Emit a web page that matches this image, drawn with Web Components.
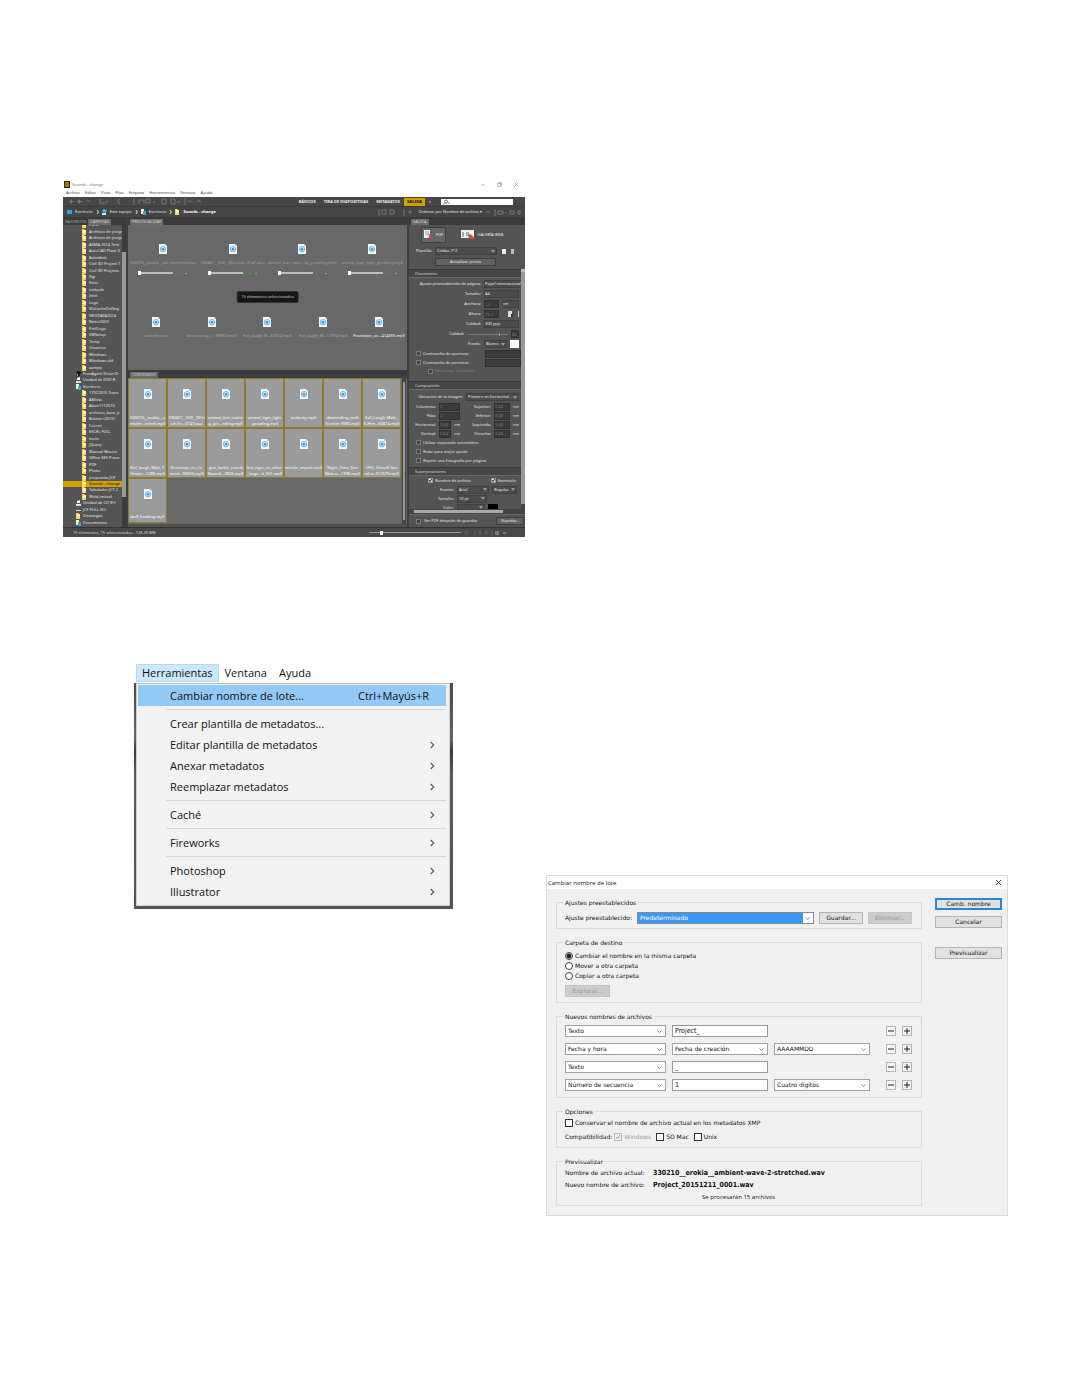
<!DOCTYPE html>
<html lang="es">
<head>
<meta charset="utf-8">
<title>Cambiar nombre de lote</title>
<style>
body{margin:0;background:#fff}
</style>
</head>
<body>
<guide-page>
  <bridge-window slot="left"></bridge-window>
  <tools-menu slot="left"></tools-menu>
  <rename-dialog slot="right"></rename-dialog>
</guide-page>
<script>
function define(name, css, html) {
  customElements.define(name, class extends HTMLElement {
    constructor() {
      super();
      const markup = typeof html === 'function' ? html(this) : html;
      this.attachShadow({mode: 'open'}).innerHTML = `<style>*{box-sizing:border-box}:host{display:block;box-sizing:border-box}:host([hidden]){display:none}${css}</style>${markup}`;
    }
  });
}

/* ---------- page ---------- */
define('guide-page', `
:host{display:grid;grid-template-columns:1fr 1fr;gap:21px;min-height:100vh;padding:180px 63px 170px}
.left{display:flex;flex-direction:column;gap:126px}
.right{align-self:end}
::slotted(tools-menu){margin:0 72px 0 71px}
`, `<div class="left"><slot name="left"></slot></div><div class="right"><slot name="right"></slot></div>`);

/* ---------- small shared parts ---------- */
define('file-icon', `:host{width:8px;height:10px}svg{display:block}`,
`<svg width="8" height="10" viewBox="0 0 8 10"><path d="M0 0H6L8 2V10H0Z" fill="#f6fafd"/><path d="M6 0V2H8Z" fill="#b9cad6"/><circle cx="4" cy="5.2" r="2.7" fill="none" stroke="#4a9fdc" stroke-width=".8"/><circle cx="4" cy="5.2" r="1.3" fill="#2f8fd8"/><path d="M.8 5.2Q4 2.2 7.2 5.2Q4 8.2.8 5.2" fill="none" stroke="#7fbde8" stroke-width=".5"/></svg>`);

define('folder-icon', `:host{width:5px;height:6px;flex:none}svg{display:block}`,
el => {
  const k = el.getAttribute('kind');
  const art = {
    drive: '<path d="M0 4H5V6H0Z" fill="#ddd"/><path d="M1 1L4 0V3H1Z" fill="#fff"/>',
    black: '<path d="M1 0L5 1 3 6 0 5Z" fill="#111"/><path d="M0 3H2V6Z" fill="#e2a13a"/>',
    desk: '<path d="M0 0H3V5H0Z" fill="#f2f7c8"/><path d="M2 2H5V6H2Z" fill="#37a6df"/>',
    blue: '<path d="M0 1H5V5H0Z" fill="#27a0e8"/>',
    pc: '<path d="M1 0L5 1 4 4 0 3Z" fill="#35b0f0"/><path d="M0 4H4V6H0Z" fill="#d3e8f4"/>',
    flat: '<path d="M0 3H5V4H0Z" fill="#ddd"/>'
  }[k] || '<path d="M0 0H2L3 1H4V6H0Z" fill="#f2d566"/><path d="M1 1H4V4H1Z" fill="#fdf0a8"/>';
  return `<svg width="5" height="6" viewBox="0 0 5 6">${art}</svg>`;
});

/* ---------- Bridge: folder tree ---------- */
const folders = [
  ['Intro','',2],['Archivos de progr','',2],['Archivos de progr','',2],['ASMA 2014 Tem','',2],['AutoCAD Plant 3','',2],
  ['Autodesk','',2],['Civil 3D Project T','',2],['Civil 3D Projects','',2],['flgr','',2],['fileio','',2],['inetpub','',2],['Intel','',2],
  ['Logs','',2],['MsCacheDelSeg','',2],['NEODATA2014','',2],['Neevi2009','',2],['PerfLogs','',2],['SWSetup','',2],['Temp','',2],
  ['Usuarios','',2],['Windows','',2],['Windows.old','',2],['xampp','',2],['FreeAgent Drive (D','black',1],['Unidad de DVD R','drive',1],
  ['Escritorio','desk',1],['17022015 Trans','',2],['ABlista','',2],['Aleze1112015','',2],['archivos_base_p','',2],['Boletin (2015)','',2],
  ['Correo','',2],['EXCEL FULL','',2],['horts','',2],['JQuery','',2],['Manual Bitacor','',2],['Office 365 Prese','',2],['PDF','',2],['Photo','',2],
  ['propuesta JCP','',2],['Sounds - change','',2,1],['Tabulador JCT 2','',2],['WebLimitud','',2],['Unidad de CD (F:)','drive',1],['JCF FULL (E:)','flat',1],
  ['Descargas','',1],['Documentos','desk',1]];
define('folder-tree', `
:host{display:flex;min-width:0;background:#555;overflow:hidden}
ul{flex:1;min-width:0;margin:-3px 0 1px;padding:0;list-style:none;display:flex;flex-direction:column}
li{flex:1 1 0;min-height:0;display:flex;align-items:center;gap:2px;padding-left:13px;white-space:nowrap;line-height:6px}
li.l2{padding-left:19px}
li.on{background:#d2a000;color:#111}
.bar{width:4px;background:#3c3c3c;padding:27px 0 30px}
.bar i{display:block;height:100%;background:#999}
`, () => `<ul>${folders.map(f => `<li class="l${f[2]} ${f[3] ? 'on' : ''}"><folder-icon kind="${f[1]}"></folder-icon><span>${f[0]}</span></li>`).join('')}</ul><div class="bar"><i></i></div>`);

/* ---------- Bridge: previews and thumbnails ---------- */
define('audio-preview', `
:host{display:flex;flex-direction:column;align-items:center;gap:6px;color:#a4a4a4;min-width:0;line-height:6px;white-space:nowrap}
:host([bright]){color:#fff}
label{display:flex;align-items:center;gap:3px;height:2px}
:host([mute]) label{display:none}
input{appearance:none;width:35px;height:2px;margin:0;background:#bdbdbd}
input::-webkit-slider-thumb{appearance:none;width:3px;height:4px;background:#fff}
b{width:6px;height:3px;background:#5b7c50}
u{width:2px;height:1px;background:#999}
`, `<file-icon></file-icon><span><slot></slot></span><label><input type="range" value="0" aria-label="Posición"><b></b><u></u></label>`);

define('media-thumb', `
:host{display:flex;flex-direction:column;align-items:center;justify-content:space-between;padding:10px 0 0;height:50px;background:#9b9b9b;border:1px solid #8b7b2c;color:#fff;min-width:0;line-height:6px;text-align:center}
:host([last]){height:45px}
span{height:12px;white-space:nowrap}
:host([last]) span{height:8px}
`, `<file-icon></file-icon><span><slot></slot></span>`);

/* ---------- Bridge: output panel ---------- */
define('panel-field', `
:host{display:flex;align-items:center;gap:3px;height:var(--h,10px);padding-right:2px}
label{display:flex;align-items:center;justify-content:flex-end;gap:3px;width:var(--w,72px);white-space:nowrap;flex:none}
`, `<label><slot></slot></label><slot name="ctl"></slot>`);

const panelCss = `
input,select,button{font:inherit;color:#e8e8e8;margin:0;border-radius:0;line-height:6px}
select{appearance:none;height:8px;padding:0 4px 0 1px;border:1px solid #414141;background:#4b4b4b url("data:image/svg+xml,%3Csvg xmlns='http://www.w3.org/2000/svg' width='4' height='3'%3E%3Cpath d='M0 0H4L2 3Z' fill='%23999'/%3E%3C/svg%3E") no-repeat right 1px center}
select.plain{background-image:none;padding:0}
input[type=text]{height:8px;border:1px solid #303030;background:#3b3b3b;color:#777;padding:0;min-width:0}
input[type=checkbox]{appearance:none;width:5px;height:5px;border:1px solid #777;background:#444;margin:0;flex:none}
input[type=checkbox]:checked{border-color:#999;background:#eee url("data:image/svg+xml,%3Csvg xmlns='http://www.w3.org/2000/svg' width='3' height='3'%3E%3Cpath d='M0 1L1 2.500 3 0' fill='none' stroke='%23222'/%3E%3C/svg%3E")}
input[type=color]{appearance:none;border:0;padding:0;width:10px;height:8px;background:#fff}
input::-webkit-color-swatch-wrapper{padding:0}
input::-webkit-color-swatch{border:0}
input[type=range]{appearance:none;height:1px;background:#777}
input::-webkit-slider-thumb{appearance:none;width:1px;height:3px;background:#999}
button{border:1px solid #3f3f3f;background:#626262;padding:0;height:8px}
`;
define('output-panel', panelCss + `
:host{display:flex;flex-direction:column;background:#545454;overflow:hidden;min-width:0}
.modes{display:flex;padding:2px 0 0 12px;gap:14px;height:19px}
.modes button{display:flex;align-items:center;justify-content:center;gap:3px;height:16px;width:25px;background:#666}
.modes button+button{width:44px;background:none;border:0}
.tpl{display:flex;align-items:center;gap:3px;height:10px;margin:2px 0 2px 7px}
.tpl select{width:62px}.tpl i{width:4px;height:5px;background:#eee;margin-left:2px}.tpl i+i{width:3px;background:#bbb}
.upd{width:61px;margin:0 0 3px 26px;flex:none}
.mid{display:flex;min-height:0}
.props{flex:1;min-width:0;height:240px;overflow:hidden}
.vbar{width:4px;background:#444;padding-bottom:5px}.vbar i{display:block;height:100%;background:#999;border-top:3px solid #bbb}
h3{margin:0;height:9px;font:inherit;color:#ddd;padding:0 0 0 6px;background:#464646;border-top:1px solid #383838;border-bottom:1px solid #686868;display:flex;align-items:center}
.sec{height:103px;padding-top:1px}.sec2{height:77px;padding-top:2px}
.check{display:flex;align-items:center;gap:2px;height:9px;padding-left:7px;white-space:nowrap}
.check input[type=text]{width:36px;margin-left:auto}
.check.sub{padding-left:19px;color:#888;height:8px}
.two{display:grid;grid-template-columns:53px 1fr}
.two panel-field{--h:9px}
.two input{width:22px}
.two panel-field:nth-child(even){--w:29px}.two panel-field:nth-child(odd){--w:27px}
.two panel-field:nth-child(even) input{width:16px}
.split{display:flex;height:9px;padding:0 5px 0 19px;justify-content:space-between}
.split label{display:flex;gap:2px;align-items:center}
.hbar{height:5px;background:#444;padding:1px 22px 1px 5px}.hbar i{display:block;height:3px;background:#aaa}
.foot{display:flex;align-items:center;gap:3px;padding:0 1px 0 7px;flex:1;border-top:1px solid #666}
.foot button{margin-left:auto;width:28px}
`, `
<div class="modes"><button><svg width="9" height="10" viewBox="0 0 9 10"><path d="M0 0H6V8H0Z" fill="#eee"/><path d="M1 2H5M1 4H5" stroke="#777" stroke-width=".6"/><path d="M3 5L5 4 9 8 7 10 4 7Z" fill="#c84b4b"/><circle cx="4" cy="6" r="1" fill="#fff"/></svg>PDF</button><button><svg width="14" height="10" viewBox="0 0 14 10"><path d="M0 0H13V8H0Z" fill="#eee"/><path d="M1 2H3V7H1ZM5 2H8V6H5Z" fill="#aaa"/><path d="M7 5L9 4 14 8 11 10 8 8Z" fill="#c84b4b"/></svg>GALERÍA WEB</button></div>
<div class="tpl"><label for="tpl">Plantilla:</label><select id="tpl"><option>Celdas 2*2</option></select><i></i><i></i></div>
<button class="upd">Actualizar previa</button>
<div class="mid"><div class="props">
<h3>Documento</h3>
<div class="sec">
<panel-field>Ajuste preestablecido de página:<select slot="ctl" class="plain" aria-label="Ajuste" style="width:38px"><option>Papel internacional</option></select></panel-field>
<panel-field>Tamaño:<select slot="ctl" class="plain" aria-label="Tamaño" style="width:38px"><option>A4</option></select></panel-field>
<panel-field>Anchura:<input slot="ctl" type="text" value="21" aria-label="Anchura" style="width:16px"><select slot="ctl" class="plain" aria-label="Unidad" style="width:19px"><option>cm</option></select></panel-field>
<panel-field>Altura:<input slot="ctl" type="text" value="29.7" aria-label="Altura" style="width:16px"><svg slot="ctl" width="18" height="8"><path d="M6 1h4v6h-4z" fill="#ddd"/><path d="M9 4h2v3h-2z" fill="#333"/><path d="M16 1h1v6h-1z" fill="#ccc"/></svg></panel-field>
<panel-field>Calidad:<select slot="ctl" class="plain" aria-label="Calidad" style="width:38px"><option>300 ppp</option></select></panel-field>
<panel-field style="--w:55px">Calidad:<input slot="ctl" type="range" value="80" aria-label="Calidad" style="width:41px"><input slot="ctl" type="text" value="80" aria-label="Calidad %" style="width:10px"></panel-field>
<panel-field>Fondo:<select slot="ctl" aria-label="Fondo" style="width:25px"><option>Blanco</option></select><input slot="ctl" type="color" value="#ffffff" aria-label="Color de fondo"></panel-field>
<div class="check"><input type="checkbox" id="c1"><label for="c1">Contraseña de apertura:</label><input type="text" aria-label="Contraseña de apertura"></div>
<div class="check"><input type="checkbox" id="c2"><label for="c2">Contraseña de permisos</label><input type="text" aria-label="Contraseña de permisos"></div>
<div class="check sub"><input type="checkbox" id="c3"><label for="c3">Desactivar impresión</label></div>
</div>
<h3>Composición</h3>
<div class="sec2">
<panel-field style="--w:54px">Ubicación de la imagen:<select slot="ctl" aria-label="Ubicación de la imagen" style="width:53px"><option>Primero en horizontal ...</option></select></panel-field>
<div class="two">
<panel-field>Columnas:<input slot="ctl" type="text" value="2" aria-label="Columnas"></panel-field><panel-field>Superior:<input slot="ctl" type="text" value="0.48" aria-label="Superior"><span slot="ctl">cm</span></panel-field>
<panel-field>Filas:<input slot="ctl" type="text" value="2" aria-label="Filas"></panel-field><panel-field>Inferior:<input slot="ctl" type="text" value="0.48" aria-label="Inferior"><span slot="ctl">cm</span></panel-field>
<panel-field>Horizontal:<input slot="ctl" type="text" value="0.64" aria-label="Horizontal" style="width:14px"><span slot="ctl">cm</span></panel-field><panel-field>Izquierda:<input slot="ctl" type="text" value="0.48" aria-label="Izquierda"><span slot="ctl">cm</span></panel-field>
<panel-field>Vertical:<input slot="ctl" type="text" value="0.64" aria-label="Vertical" style="width:14px"><span slot="ctl">cm</span></panel-field><panel-field>Derecha:<input slot="ctl" type="text" value="0.48" aria-label="Derecha"><span slot="ctl">cm</span></panel-field>
</div>
<div class="check"><input type="checkbox" id="c4"><label for="c4">Utilizar espaciado automático</label></div>
<div class="check"><input type="checkbox" id="c5"><label for="c5">Rotar para mejor ajuste</label></div>
<div class="check"><input type="checkbox" id="c6"><label for="c6">Repetir una fotografía por página</label></div>
</div>
<h3>Superposiciones</h3>
<div class="split"><label><input type="checkbox" checked>Nombre de archivo</label><label><input type="checkbox" checked>Extensión</label></div>
<panel-field style="--w:45px;--h:9px">Fuente:<select slot="ctl" aria-label="Fuente" style="width:32px"><option>Arial</option></select><select slot="ctl" aria-label="Estilo" style="width:25px"><option>Regular</option></select></panel-field>
<panel-field style="--w:45px;--h:9px">Tamaño:<select slot="ctl" aria-label="Tamaño de fuente" style="width:30px"><option>10 pt</option></select></panel-field>
<panel-field style="--w:45px;--h:9px">Color:<select slot="ctl" aria-label="Color" style="width:28px"><option></option></select><input slot="ctl" type="color" value="#000000" aria-label="Color de fuente"></panel-field>
</div><div class="vbar"><i></i></div></div>
<div class="hbar"><i></i></div>
<div class="foot"><input type="checkbox" id="c7"><label for="c7">Ver PDF después de guardar</label><button>Guardar...</button></div>
`);

/* ---------- Bridge: window ---------- */
const thumbs = ['330210__erokia__a<br>mbien...tched.mp3','330401__503__09 h<br>urt-fin...0147.wav','animal_lion_roarin<br>g_gro...nding.mp3','animal_tiger_light<br>_growling.mp3','audacity.mp3<br>','descending_craft<br>frontier-9980.mp3','Evil_Laugh_Male_<br>6-Him...60874.mp3','Evil_laugh_Male_9<br>Himan...1286.mp3','Footsteps_on_Ce<br>ment...93650.mp3','gun_battle_sound<br>Raverd...7826.mp3','hot_tiger_or_other<br>_large...d_001.mp3','missile_impact.mp3<br>','Night_Time_Stor<br>Mabos...1396.mp3','UFO_Takeoff-Sou<br>nd-er-312579.mp3'];
define('bridge-window', panelCss + `
:host{font:4px "Noto Sans","Open Sans",sans-serif;line-height:6px;color:#e6e6e6;background:#4b4b4b;min-width:0;overflow:hidden}
.title{display:flex;align-items:center;gap:2px;height:9px;background:#fff;color:#777;padding:0 6px 0 1px}
.title nav{margin-left:auto;display:flex;gap:12px}
.menu{display:flex;gap:5px;height:8px;background:#fff;color:#444;padding:1px 3px}
.tools{display:flex;align-items:center;height:9px;background:#474747;padding-left:5px}
.tools svg{flex:none}
.work{margin-left:auto;display:flex;align-items:center;gap:8px;font-weight:700;color:#eee;white-space:nowrap}
.work b{background:#d2a000;color:#222;padding:1px 3px;margin:0 -4px}
.work span.dim{color:#999;margin-right:2px}
.work input{width:72px;height:6px;border:0;margin-right:12px;background:#fff url("data:image/svg+xml,%3Csvg xmlns='http://www.w3.org/2000/svg' width='8' height='6'%3E%3Ccircle cx='4' cy='2.500' r='1.500' fill='none' stroke='%23444' stroke-width='.7'/%3E%3Cpath d='M3 3.500L1 5.500M6 4H8' stroke='%23444' stroke-width='.7'/%3E%3C/svg%3E") no-repeat 1px 0}
.path{display:flex;align-items:center;gap:3px;height:11px;background:#454545;padding:0 4px;border-top:1px solid #3c3c3c;white-space:nowrap}
.path b{color:#fff}.path .sort{margin-left:auto;display:flex;align-items:center;gap:3px}
.body{display:grid;grid-template-columns:63px 279fr 116fr;column-gap:2px;background:#3e3e3e}
.col{display:flex;flex-direction:column;min-width:0}
.tabs{height:8px;display:flex;align-items:end;background:#3b3b3b;color:#aaa;white-space:nowrap;padding-left:2px;gap:2px;flex:none}
.tabs b{font-weight:400;background:#6c6c6c;color:#ccc;padding:0 2px}
.pre{height:145px;background:#686868;padding-top:19px;position:relative}
.r4{display:grid;grid-template-columns:repeat(4,1fr);height:73px}
.r5{display:grid;grid-template-columns:repeat(5,1fr)}
.tip{position:absolute;left:50%;top:66px;transform:translateX(-50%);background:#161616;border:1px solid #333;border-radius:2px;padding:1px 4px;color:#ccc;white-space:nowrap;line-height:8px}
.gridwrap{display:flex;height:146px;background:#686868}
.grid{flex:1;min-width:0;display:grid;grid-template-columns:repeat(7,1fr);align-content:start}
.gridwrap>i{width:4px;margin:0 1px 0 1px;background:#999;border:1px solid #444;border-width:4px 1px}
.gap{height:3px;background:#505050}
folder-tree{flex:1;height:302px}
output-panel{flex:1;height:302px}
.status{display:flex;align-items:center;height:10px;background:#484848;border-top:1px solid #333;padding:0 4px 0 10px;color:#ddd}
.status input{margin-left:auto;width:92px;height:1px;background:#999}
.status input::-webkit-slider-thumb{width:3px;height:4px;background:#fff}
`, `
<div class="title"><svg width="6" height="7"><path d="M0 0H6V7H0Z" fill="#33290c"/><path d="M1 1H5V6H1Z" fill="#9b7a16"/></svg><span>Sounds - change</span>
<nav><svg width="4" height="5"><path d="M0 3H4" stroke="#888" stroke-width=".6"/></svg><svg width="5" height="5"><path d="M.5 1.5H3.5V4.5H.5ZM1.5 1V.5H4.5V3.5H4" fill="none" stroke="#888" stroke-width=".6"/></svg><svg width="5" height="5"><path d="M.5 .5L4.5 4.5M4.5 .5L.5 4.5" stroke="#888" stroke-width=".6"/></svg></nav></div>
<div class="menu"><span>Archivo</span><span>Editar</span><span>Vista</span><span>Pilas</span><span>Etiqueta</span><span>Herramientas</span><span>Ventana</span><span>Ayuda</span></div>
<div class="tools"><svg width="145" height="9" fill="none" stroke="#777"><path d="M1 4.500L4 2V7ZM4 4h2v1h-2ZM9 4.500L12 2V7ZM12 4h2v1h-2Z" fill="#777" stroke="none"/><path d="M19 4h3M32 2v4h4v2M37 5h3M52 2q-4 2 0 5M66 1v7" /><path d="M71 7V3h5v4M78 2h4v4h-4ZM85 5h2M94 2h4v5h-4ZM103 2h4v5h-4ZM109 5h3M117 1v7M120 5q2-3 4 0M129 5q2-3 4 0"/></svg>
<div class="work"><span>BÁSICOS</span><span>TIRA DE DIAPOSITIVAS</span><span>METADATOS</span><b>SALIDA</b><span class="dim">▾</span><input type="search" aria-label="Buscar"></div></div>
<div class="path"><folder-icon kind="blue"></folder-icon>Escritorio <span>❯</span><folder-icon kind="pc"></folder-icon>Este equipo <span>❯</span><folder-icon kind="desk"></folder-icon>Escritorio <span>❯</span><folder-icon></folder-icon><b>Sounds - change</b>
<div class="sort"><svg width="38" height="7" fill="none" stroke="#777"><path d="M1 0V7M4 1h4v4h-4ZM12 1h4v4h-4ZM26 0V7M31 2h2v2h-2z"/></svg><span>Ordenar por Nombre de archivo ▾</span><svg width="36" height="7" fill="none" stroke="#777"><path d="M1 4L3 2 5 4M10 0V7M13 2h5v3h-5ZM20 4h2M25 2h4v3h-4ZM33 2h2v3h-2Z"/></svg></div></div>
<div class="body">
<div class="col"><div class="tabs">FAVORITOS <b>CARPETAS</b></div><folder-tree></folder-tree></div>
<div class="col"><div class="tabs"><b>PREVISUALIZAR</b></div>
<div class="pre"><div class="r4"><audio-preview>330210__erokia__m2-stretched.wav</audio-preview><audio-preview>330401__503__09-ocean-0147.wav</audio-preview><audio-preview>animal_lion_roari...og_growling.mp3</audio-preview><audio-preview>animal_tiger_light_growling.mp3</audio-preview></div>
<div class="r5"><audio-preview mute>audacity.mp3</audio-preview><audio-preview mute>descending_c...99980.mp3</audio-preview><audio-preview mute>Evil_laugh_M...60874.mp3</audio-preview><audio-preview mute>Evil_laugh_M...17394.mp3</audio-preview><audio-preview mute bright>Footsteps_on...414655.mp3</audio-preview></div>
<div class="tip">15 elementos seleccionados</div></div>
<div class="tabs"><b>CONTENIDO</b></div>
<div class="gridwrap"><div class="grid">${thumbs.map(t => `<media-thumb>${t}</media-thumb>`).join('')}<media-thumb last>wolf_howling.mp3</media-thumb></div><i></i></div>
<div class="gap"></div></div>
<div class="col"><div class="tabs"><b>SALIDA</b></div><output-panel></output-panel></div>
</div>
<div class="status"><span>15 elementos, 15 seleccionados - 126.25 MB</span><input type="range" value="12" aria-label="Tamaño de miniatura"><svg width="60" height="6" fill="none" stroke="#777"><path d="M4 1h3v3h-3ZM14 0v6M18 1h2v3h-2ZM24 1h2v3h-2ZM31 0v6" stroke="#606060"/><path d="M34 2h4M34 4h4M42 3h3" stroke="#aaa"/></svg></div>
`);

/* ---------- Herramientas menu ---------- */
define('menu-row', `
button{display:flex;align-items:center;width:100%;height:21px;border:0;background:none;font:inherit;color:#111;padding:0 11px 0 32px;text-align:left}
:host([active]) button{background:#91c9f7;padding-right:17px}
.t{flex:1;white-space:nowrap}
svg{display:none}:host([sub]) svg{display:block}
`, `<button role="menuitem"><span class="t"><slot></slot></span><slot name="key"></slot><svg width="5" height="8" viewBox="0 0 5 8"><path d="M.7 1L3.700 4 .7 7" fill="none" stroke="#555" stroke-width="1.100"/></svg></button>`);
define('tools-menu', `
:host{font:11px/16px "Open Sans","Noto Sans",sans-serif;color:#111}
.bar{display:flex;height:20px;margin-left:2px;padding-top:1px}
.bar button{font:inherit;color:inherit;border:1px solid transparent;background:none;padding:0 5px;height:18px;line-height:16px}
.bar .on{background:#cce8ff;border-color:#b4dcfa}
.back{background:linear-gradient(#4a4a4a,#666 25%,#3c3c3c 30%,#5b5b5b 40%,#555);padding:0 3px 3px 2px}
.pop{background:#f2f2f2;border:1px solid #d0d0d0;border-top-color:#bbb;padding:1px 3px 3px 1px}
hr{border:0;border-top:1px solid #d5d5d5;margin:3px 0 3px 28px}
`, `<div class="bar"><button class="on">Herramientas</button><button>Ventana</button><button>Ayuda</button></div>
<div class="back"><div class="pop" role="menu">
<menu-row active>Cambiar nombre de lote...<span slot="key">Ctrl+Mayús+R</span></menu-row><hr>
<menu-row>Crear plantilla de metadatos...</menu-row>
<menu-row sub>Editar plantilla de metadatos</menu-row>
<menu-row sub>Anexar metadatos</menu-row>
<menu-row sub>Reemplazar metadatos</menu-row><hr>
<menu-row sub>Caché</menu-row><hr>
<menu-row sub>Fireworks</menu-row><hr>
<menu-row sub>Photoshop</menu-row>
<menu-row sub>Illustrator</menu-row>
</div></div>`);

/* ---------- rename dialog ---------- */
define('group-box', `
fieldset{margin:0;min-width:0;border:1px solid #dcdcdc;padding:var(--pt,5px) 9px var(--pb,5px) 8px;display:block}
legend{height:8px;line-height:10px;padding:0 2px;margin-left:-2px}
div{display:flex;flex-direction:column;gap:var(--gap,0)}
`, el => `<fieldset><legend>${el.getAttribute('label')}</legend><div><slot></slot></div></fieldset>`);

define('name-row', `
:host{display:flex;align-items:center}
.f{flex:1;display:grid;grid-template-columns:102fr 97fr 97fr;gap:6px;margin-right:16px}
button{width:10px;height:10px;padding:0;border:1px solid #b5b5b5;background:#f4f4f4;display:grid;place-items:center}
button+button{margin-left:6px}
svg{display:block}
`, `<div class="f"><slot></slot></div><button aria-label="Quitar"><svg width="6" height="6"><path d="M0 3H6" stroke="#222"/></svg></button><button aria-label="Añadir"><svg width="6" height="6"><path d="M0 3H6M3 0V6" stroke="#222"/></svg></button>`);

define('rename-dialog', `
:host{font:6px/10px "DejaVu Sans",sans-serif;color:#111;background:#f0f0f0;border:1px solid #dadada}
header{display:flex;align-items:center;justify-content:space-between;height:13px;background:#fff;padding:0 5px 0 1px;font:6px/10px "Open Sans",sans-serif}
.main{display:grid;grid-template-columns:1fr 67px;gap:13px;padding:9px 5px 9px 9px}
.groups{display:flex;flex-direction:column;gap:9px}
.side{display:flex;flex-direction:column;gap:6px}
.side button:last-child{margin-top:13px}
button,select,input{font:inherit;color:inherit;margin:0;border-radius:0}
button{height:12px;border:1px solid #b4b4b4;background:#e1e1e1;padding:0 5px;line-height:10px}
button:disabled{background:#ccc;border-color:#c4c4c4;color:#999}
.primary{border:1px solid #2a86d3;outline:1px solid #2a86d3;outline-offset:-2px}
select{--arrow:url("data:image/svg+xml,%3Csvg xmlns='http://www.w3.org/2000/svg' width='5' height='3'%3E%3Cpath d='M.5.5L2.500 2.500 4.500.5' fill='none' stroke='%23555' stroke-width='.7'/%3E%3C/svg%3E") no-repeat right 3px center;appearance:none;height:12px;min-width:0;border:1px solid #a2a2a2;background:var(--arrow),#fff;padding:0 2px}
input[type=text]{height:12px;min-width:0;width:100%;border:1px solid #999;background:#fff;padding:0 2px;font:7px/10px "DejaVu Sans Condensed","DejaVu Sans",sans-serif}
.preset{display:flex;align-items:center;gap:5px;height:12px}
.preset select{flex:1;background:var(--arrow),linear-gradient(#fff,#fff) no-repeat right/10px 100%,#3a97f7;color:#fff;border:1px solid #888}
.preset button{width:44px;padding:0}
.line{display:flex;align-items:center;gap:2px;height:10px;white-space:nowrap}
.explore{width:45px;margin-top:4px;padding:0}
input[type=radio]{appearance:none;width:8px;height:8px;border:1px solid #444;border-radius:50%;background:#fff}
input[type=radio]:checked{background:radial-gradient(#222 0 2px,#fff 3px)}
input[type=checkbox]{appearance:none;width:8px;height:8px;border:1px solid #333;background:#fff}
input[type=checkbox]:disabled{border-color:#bbb;background:#eee url("data:image/svg+xml,%3Csvg xmlns='http://www.w3.org/2000/svg' width='6' height='6'%3E%3Cpath d='M1 3L2.500 4.500 5 1' fill='none' stroke='%23999'/%3E%3C/svg%3E")}
.line label+input{margin-left:3px}
.off{color:#999}
.kv span{width:86px}
.kv b{font:700 7px/10px "DejaVu Sans Condensed","DejaVu Sans",sans-serif}
.note{padding-left:137px;font:6px/10px "Open Sans",sans-serif}
`, `
<header><span>Cambiar nombre de lote</span><svg width="7" height="7"><path d="M1 1L6 6M6 1L1 6" stroke="#222" stroke-width=".8"/></svg></header>
<div class="main"><div class="groups">
<group-box label="Ajustes preestablecidos" style="--pt:6px;--pb:4px"><div class="preset"><label for="p">Ajuste preestablecido:</label><select id="p"><option>Predeterminado</option></select><button>Guardar...</button><button disabled>Eliminar...</button></div></group-box>
<group-box label="Carpeta de destino">
<div class="line"><input type="radio" name="d" id="r1" checked><label for="r1">Cambiar el nombre en la misma carpeta</label></div>
<div class="line"><input type="radio" name="d" id="r2"><label for="r2">Mover a otra carpeta</label></div>
<div class="line"><input type="radio" name="d" id="r3"><label for="r3">Copiar a otra carpeta</label></div>
<button class="explore" disabled>Explorar...</button></group-box>
<group-box label="Nuevos nombres de archivos" style="--gap:6px;--pb:6px">
<name-row><select aria-label="Tipo 1"><option>Texto</option></select><input type="text" value="Project_" aria-label="Texto 1"></name-row>
<name-row><select aria-label="Tipo 2"><option>Fecha y hora</option></select><select aria-label="Fecha"><option>Fecha de creación</option></select><select aria-label="Formato"><option>AAAAMMDD</option></select></name-row>
<name-row><select aria-label="Tipo 3"><option>Texto</option></select><input type="text" value="_" aria-label="Texto 2"></name-row>
<name-row><select aria-label="Tipo 4"><option>Número de secuencia</option></select><input type="text" value="1" aria-label="Inicio"><select aria-label="Dígitos"><option>Cuatro dígitos</option></select></name-row>
</group-box>
<group-box label="Opciones" style="--pt:3px;--gap:4px">
<div class="line"><input type="checkbox" id="k1"><label for="k1">Conservar el nombre de archivo actual en los metadatos XMP</label></div>
<div class="line"><span>Compatibilidad:</span><input type="checkbox" id="k2" checked disabled><label for="k2" class="off">Windows</label><input type="checkbox" id="k3"><label for="k3">SO Mac</label><input type="checkbox" id="k4"><label for="k4">Unix</label></div>
</group-box>
<group-box label="Previsualizar" style="--pt:3px;--pb:3px;--gap:2px">
<div class="line kv"><span>Nombre de archivo actual:</span><b>330210__erokia__ambient-wave-2-stretched.wav</b></div>
<div class="line kv"><span>Nuevo nombre de archivo:</span><b>Project_20151211_0001.wav</b></div>
<div class="line note">Se procesarán 15 archivos</div>
</group-box>
</div>
<div class="side"><button class="primary">Camb. nombre</button><button>Cancelar</button><button>Previsualizar</button></div>
</div>`);
</script>
</body>
</html>
